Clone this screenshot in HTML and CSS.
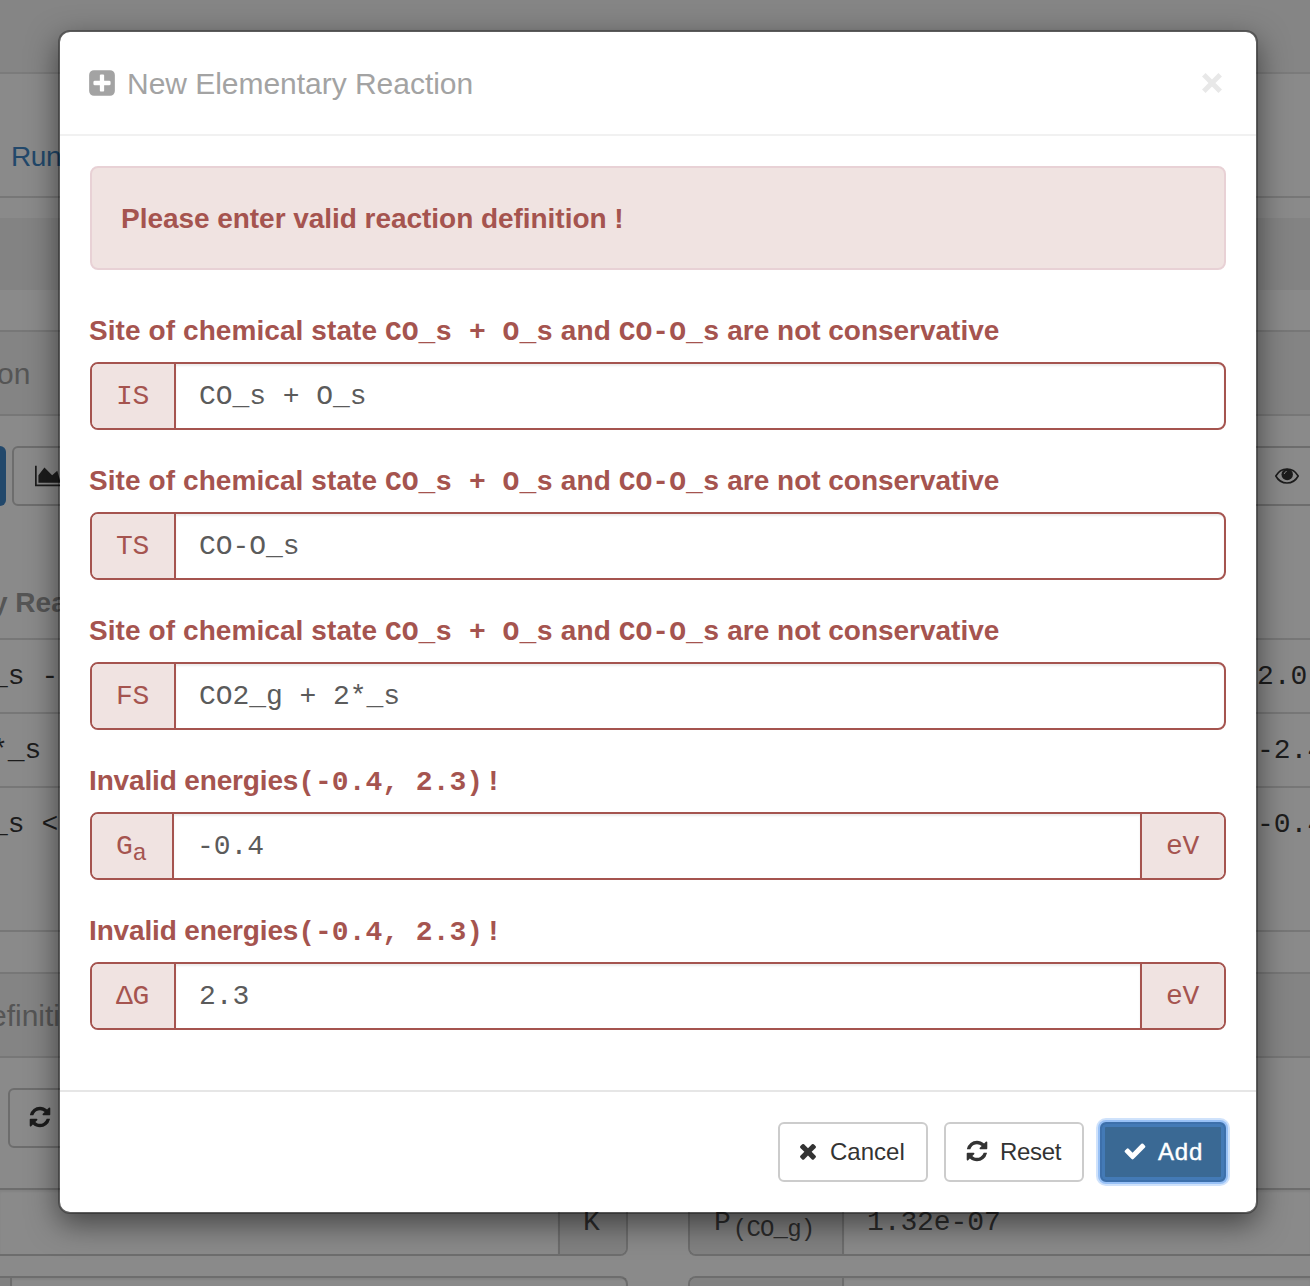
FILE: index.html
```html
<!DOCTYPE html>
<html lang="en">
<head>
<meta charset="utf-8">
<title>New Elementary Reaction</title>
<link rel="stylesheet" href="styles.css">
</head>
<body>
<svg class="defs" width="0" height="0">
  <symbol id="refresh" viewBox="0 0 1792 1792"><path d="M1639 1056q0 5-1 7-64 268-268 434.500t-478 166.500q-146 0-282.500-55t-243.500-157l-129 129q-19 19-45 19t-45-19-19-45v-448q0-26 19-45t45-19h448q26 0 45 19t19 45-19 45l-137 137q71 66 161 102t187 36q134 0 250-65t186-179q11-17 53-117 8-23 30-23h192q13 0 22.500 9.500t9.500 22.500zm25-800v448q0 26-19 45t-45 19h-448q-26 0-45-19t-19-45 19-45l138-138q-148-137-349-137-134 0-250 65t-186 179q-11 17-53 117-8 23-30 23h-199q-13 0-22.500-9.500t-9.500-22.500v-7q65-268 270-434.500t480-166.500q146 0 284 55.500t245 156.500l130-129q19-19 45-19t45 19 19 45z"/></symbol>
</svg>

<div class="page">
  <div class="topbar"></div>
  <nav class="nav"><a>Run</a></nav>
  <div class="crumb"></div>
  <div class="heading heading-a">on</div>
  <div class="toolbar">
    <span class="btn-blue"></span>
    <span class="tool chart"><svg width="27.430" height="24" viewBox="0 0 2048 1792"><path d="M2048 1536v128h-2048v-1536h128v1408h1920zm-384-1024l256 896h-1664v-576l448-576 576 576z"/></svg></span>
    <span class="tool view"><svg class="eye" width="24" height="16" viewBox="0 0 24 16"><path class="lid" d="M.800 8C6 -1.400 18 -1.400 23.200 8C18 17.400 6 17.400 .800 8z"/><circle cx="12.200" cy="6.500" r="5.700"/><path class="shine" d="M9.300 5.600Q9.600 3.900 11.300 3.500"/></svg></span>
  </div>
  <div class="table">
    <div class="thead">y Rea</div>
    <div class="tr"><span>_s -</span><span class="num">2.0</span></div>
    <div class="tr"><span>*_s</span><span class="num">-2.4</span></div>
    <div class="tr last"><span>_s &lt;</span><span class="num">-0.4</span></div>
  </div>
  <div class="heading heading-b">efiniti</div>
  <div class="toolbar2"><span class="tool"><svg width="24" height="24"><use href="#refresh"/></svg></span></div>
  <div class="params">
    <div class="param"><span class="cell"></span><span class="unit">K</span></div>
    <div class="param right"><span class="name">P<sub>(CO_g)</sub></span><span class="cell">1.32e-07</span></div>
  </div>
  <div class="params">
    <div class="param"><span class="stub"></span><span class="cell"></span></div>
    <div class="param right"><span class="name"></span><span class="cell"></span></div>
  </div>
</div>

<div class="modal">
  <header class="modal-header">
    <svg class="plus" width="30" height="30" viewBox="0 0 1792 1792"><path d="M1408 960v-128q0-26-19-45t-45-19h-320v-320q0-26-19-45t-45-19h-128q-26 0-45 19t-19 45v320h-320q-26 0-45 19t-19 45v128q0 26 19 45t45 19h320v320q0 26 19 45t45 19h128q26 0 45-19t19-45v-320h320q26 0 45-19t19-45zm256-544v960q0 119-84.500 203.500t-203.500 84.500h-960q-119 0-203.500-84.500t-84.500-203.500v-960q0-119 84.500-203.500t203.500-84.500h960q119 0 203.500 84.500t84.500 203.500z"/></svg>
    <h4>New Elementary Reaction</h4>
    <svg class="close" width="22" height="22" viewBox="0 0 22 22"><path d="M2.800 2.800L19.200 19.200M19.200 2.800L2.800 19.200"/></svg>
  </header>
  <div class="modal-body">
    <div class="alert">Please enter valid reaction definition !</div>
    <div class="field">
      <label>Site of chemical state <code>CO_s + O_s</code> and <code>CO-O_s</code><span class="tail"> are not conservative</span></label>
      <div class="group"><span class="addon">IS</span><span class="input">CO_s + O_s</span></div>
    </div>
    <div class="field">
      <label>Site of chemical state <code>CO_s + O_s</code> and <code>CO-O_s</code><span class="tail"> are not conservative</span></label>
      <div class="group"><span class="addon">TS</span><span class="input">CO-O_s</span></div>
    </div>
    <div class="field">
      <label>Site of chemical state <code>CO_s + O_s</code> and <code>CO-O_s</code><span class="tail"> are not conservative</span></label>
      <div class="group"><span class="addon">FS</span><span class="input">CO2_g + 2*_s</span></div>
    </div>
    <div class="field">
      <label class="energy">Invalid energies<code>(-0.4, 2.3)</code> !</label>
      <div class="group"><span class="addon narrow">G<sub>a</sub></span><span class="input">-0.4</span><span class="addon end">eV</span></div>
    </div>
    <div class="field">
      <label class="energy">Invalid energies<code>(-0.4, 2.3)</code> !</label>
      <div class="group"><span class="addon">ΔG</span><span class="input">2.3</span><span class="addon end">eV</span></div>
    </div>
  </div>
  <footer class="modal-footer">
    <span class="btn cancel"><svg width="20" height="24" viewBox="150 0 1493 1792"><path d="M1490 1322q0 40-28 68l-136 136q-28 28-68 28t-68-28l-294-294-294 294q-28 28-68 28t-68-28l-136-136q-28-28-28-68t28-68l294-294-294-294q-28-28-28-68t28-68l136-136q28-28 68-28t68 28l294 294 294-294q28-28 68-28t68 28l136 136q28 28 28 68t-28 68l-294 294 294 294q28 28 28 68z"/></svg>Cancel</span>
    <span class="btn reset"><svg width="24" height="24"><use href="#refresh"/></svg>Reset</span>
    <span class="btn add"><svg width="24" height="24" viewBox="0 0 1792 1792"><path d="M1671 566q0 40-28 68l-724 724-136 136q-28 28-68 28t-68-28l-136-136-362-362q-28-28-28-68t28-68l136-136q28-28 68-28t68 28l294 295 656-657q28-28 68-28t68 28l136 136q28 28 28 68z"/></svg>Add</span>
  </footer>
</div>
</body>
</html>
```
FILE: styles.css
```css
* { box-sizing: border-box; }
body {
  margin: 0;
  width: 1310px;
  height: 1286px;
  overflow: hidden;
  position: relative;
  background: #8a8a8a;
  font: 28px/40px "Liberation Sans", Arial, sans-serif;
}
.defs { position: absolute; }
svg { flex: none; fill: currentColor; }
code, .input, .addon, .tr, .cell, .unit, .name {
  font-family: "Liberation Mono", "Courier New", monospace;
  white-space: pre;
}
sub { font-size: 24px; line-height: 0; vertical-align: -6px; }

/* dimmed page behind the dialog */
.page { height: 1286px; overflow: hidden; color: #1c1c1c; }
.topbar { height: 74px; background: #858585; border-bottom: 2px solid #7b7b7b; }
.nav { height: 124px; padding: 63px 0 0 11px; border-bottom: 2px solid #777; color: #22486b; letter-spacing: -.4px; }
.crumb { height: 72px; margin: 20px 0 40px; background: #838383; }
.heading {
  height: 86px;
  padding-top: 21px;
  line-height: 42px;
  font-size: 30px;
  background: #848484;
  border: solid #777;
  border-width: 2px 0;
  color: #555;
}
.heading-a { text-indent: -3px; }
.heading-b { margin-top: 40px; text-indent: -10px; }
.toolbar { display: flex; height: 60px; margin-top: 30px; }
.btn-blue { width: 6px; margin-right: 6px; background: #22486b; border-radius: 0 6px 6px 0; }
.tool { display: flex; align-items: center; border: 2px solid #6d6d6d; border-radius: 6px; }
.chart { width: 120px; padding: 0 0 1px 21px; }
.view { margin-left: auto; width: 110px; padding-left: 73px; border-right: 0; border-radius: 6px 0 0 6px; }
.lid { fill: none; stroke: currentColor; stroke-width: 1.6px; }
.shine { fill: none; stroke: #8a8a8a; stroke-width: .9px; stroke-linecap: round; }
.table { height: 426px; padding-top: 77px; border-bottom: 2px solid #777; }
.thead { height: 55px; font-weight: bold; color: #555; text-indent: -8px; }
.tr { display: flex; justify-content: space-between; height: 74px; padding-top: 17px; border-top: 2px solid #777; }
.tr span:first-child { margin-left: -9px; }
.tr .num { width: 53px; overflow: hidden; }
.last { height: 144px; }
.toolbar2 { display: flex; height: 60px; margin: 30px 0 40px 8px; }
.toolbar2 .tool { width: 120px; padding: 0 0 2px 18px; }
.params { display: flex; gap: 60px; height: 68px; margin-bottom: 20px; color: #2c2c2c; }
.param { display: flex; flex: none; width: 628px; border: 2px solid #6d6d6d; border-left: 0; border-radius: 0 8px 8px 0; }
.right { width: 622px; border-left: 2px solid #6d6d6d; border-right: 0; border-radius: 8px 0 0 8px; }
.cell { flex: 1; padding: 13px 23px; letter-spacing: -.1px; box-shadow: inset 0 2px 2px rgba(0,0,0,.06); }
.unit, .name { padding: 13px 23px; background: #818181; border-radius: 0 6px 6px 0; }
.unit { width: 68px; border-left: 2px solid #6d6d6d; }
.name { width: 154px; padding-left: 24px; border-right: 2px solid #6d6d6d; border-radius: 6px 0 0 6px; }
.name sub { margin-left: 2px; letter-spacing: -.8px; }
.stub { width: 12px; background: #818181; border-right: 2px solid #6d6d6d; }

/* dialog */
.modal {
  position: absolute;
  left: 58px;
  top: 30px;
  width: 1200px;
  height: 1184px;
  border: 2px solid rgba(0,0,0,.3);
  border-radius: 12px;
  background: #fff;
  background-clip: padding-box;
  box-shadow: 0 10px 30px rgba(0,0,0,.5);
}
.modal-header {
  display: flex;
  align-items: center;
  height: 104px;
  padding: 0 33px 0 27px;
  border-bottom: 2px solid #f1f1f1;
  color: #a3a3a3;
}
.modal-header h4 { margin: 1px auto 0 10px; font-size: 30px; font-weight: normal; line-height: 42px; letter-spacing: -.03px; }
.close { fill: none; stroke: #e8e8e8; stroke-width: 5px; }
.modal-body { height: 954px; padding: 30px; color: #a5544f; font-weight: bold; }
.alert { height: 104px; margin-bottom: 40px; padding: 31px 29px; border: 2px solid #e8d1d5; border-radius: 8px; background: #f0e3e1; letter-spacing: -.04px; }
.field { height: 150px; }
label { display: block; height: 52px; padding-top: 1px; margin-left: -1px; white-space: nowrap; letter-spacing: .08px; }
label code { letter-spacing: 0; }
.tail { letter-spacing: -.02px; }
.energy { letter-spacing: -.15px; }
.energy code { margin-right: -2px; }
.group { display: flex; height: 68px; border: 2px solid #a5544f; border-radius: 8px; font-weight: normal; overflow: hidden; }
.addon { width: 84px; padding: 13px 0 13px 24px; background: #f0e3e1; border-right: 2px solid #a5544f; letter-spacing: -.3px; }
.narrow { width: 82px; }
.end { border-right: 0; border-left: 2px solid #a5544f; }
.input { flex: 1; padding: 13px 23px; color: #5b5b5b; letter-spacing: -.05px; box-shadow: inset 0 2px 2px rgba(0,0,0,.075); }
.modal-footer { display: flex; justify-content: flex-end; gap: 16px; height: 122px; padding: 30px; border-top: 2px solid #e6e6e6; }
.btn {
  display: flex;
  align-items: center;
  height: 60px;
  padding-left: 18px;
  border: 2px solid #ccc;
  border-radius: 6px;
  color: #333;
  font-size: 24px;
}
.btn svg { margin-bottom: 2px; }
.cancel { width: 150px; }
.cancel svg { margin-right: 12px; }
.reset { width: 140px; padding-left: 19px; letter-spacing: -.3px; }
.reset svg { margin-right: 11px; }
.add {
  width: 126px;
  padding-left: 21px;
  color: #fff;
  background: #3a6994;
  border-color: #3d70ab;
  box-shadow: inset 0 0 0 3px #437ab6, 0 0 0 2px #98c1f6, 0 0 0 4px #cfe2fb;
  letter-spacing: .8px;
  -webkit-text-stroke: .4px #fff;
}
.add svg { margin-right: 11px; }
```
